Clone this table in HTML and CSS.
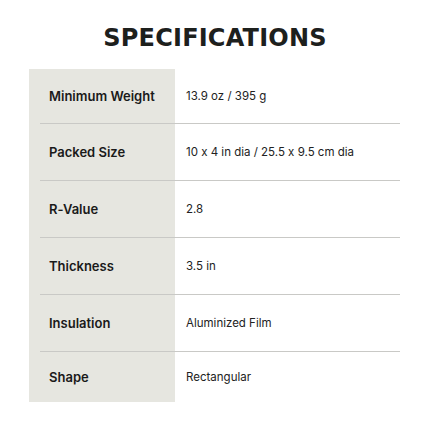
FILE: index.html
```html
<!DOCTYPE html>
<html>
<head>
<meta charset="utf-8">
<link rel="stylesheet" href="styles.css">
</head>
<body>
<main class="page">
  <h1 class="title">SPECIFICATIONS</h1>
  <div class="specs">
    <div class="row"><div class="label">Minimum Weight</div><div class="value">13.9 oz / 395 g</div></div>
    <div class="row"><div class="label">Packed Size</div><div class="value">10 x 4 in dia / 25.5 x 9.5 cm dia</div></div>
    <div class="row"><div class="label">R-Value</div><div class="value">2.8</div></div>
    <div class="row"><div class="label">Thickness</div><div class="value">3.5 in</div></div>
    <div class="row"><div class="label">Insulation</div><div class="value">Aluminized Film</div></div>
    <div class="row last"><div class="label">Shape</div><div class="value">Rectangular</div></div>
  </div>
</main>
</body>
</html>
```
FILE: styles.css
```css
html, body {
  margin: 0;
  padding: 0;
  background: #ffffff;
}
.page {
  width: 430px;
  height: 430px;
  padding-top: 22px;
  box-sizing: border-box;
  font-family: Inter, "Liberation Sans", sans-serif;
  font-feature-settings: "calt" 0;
  color: #1b1b1b;
}
.title {
  margin: 0;
  text-align: center;
  font-family: "DejaVu Sans", sans-serif;
  font-weight: bold;
  font-size: 24px;
  line-height: 32px;
  letter-spacing: 0.2px;
  color: #1d201d;
}
.specs {
  margin: 15px 30px 0 29px;
  background: linear-gradient(to right, #e6e6e0 146px, transparent 146px);
}
.row {
  margin-left: 11px;
  display: grid;
  grid-template-columns: 146px 1fr;
  align-items: center;
  height: 56px;
  border-bottom: 1px solid #c9c9c6;
}
.row:first-child {
  height: 54px;
}
.row.last {
  border-bottom: none;
  height: 50px;
}
.label {
  padding-left: 9px;
  font-weight: 600;
  font-size: 13px;
  color: #1a1a1a;
}
.value {
  font-size: 11.5px;
  color: #222;
}
```
